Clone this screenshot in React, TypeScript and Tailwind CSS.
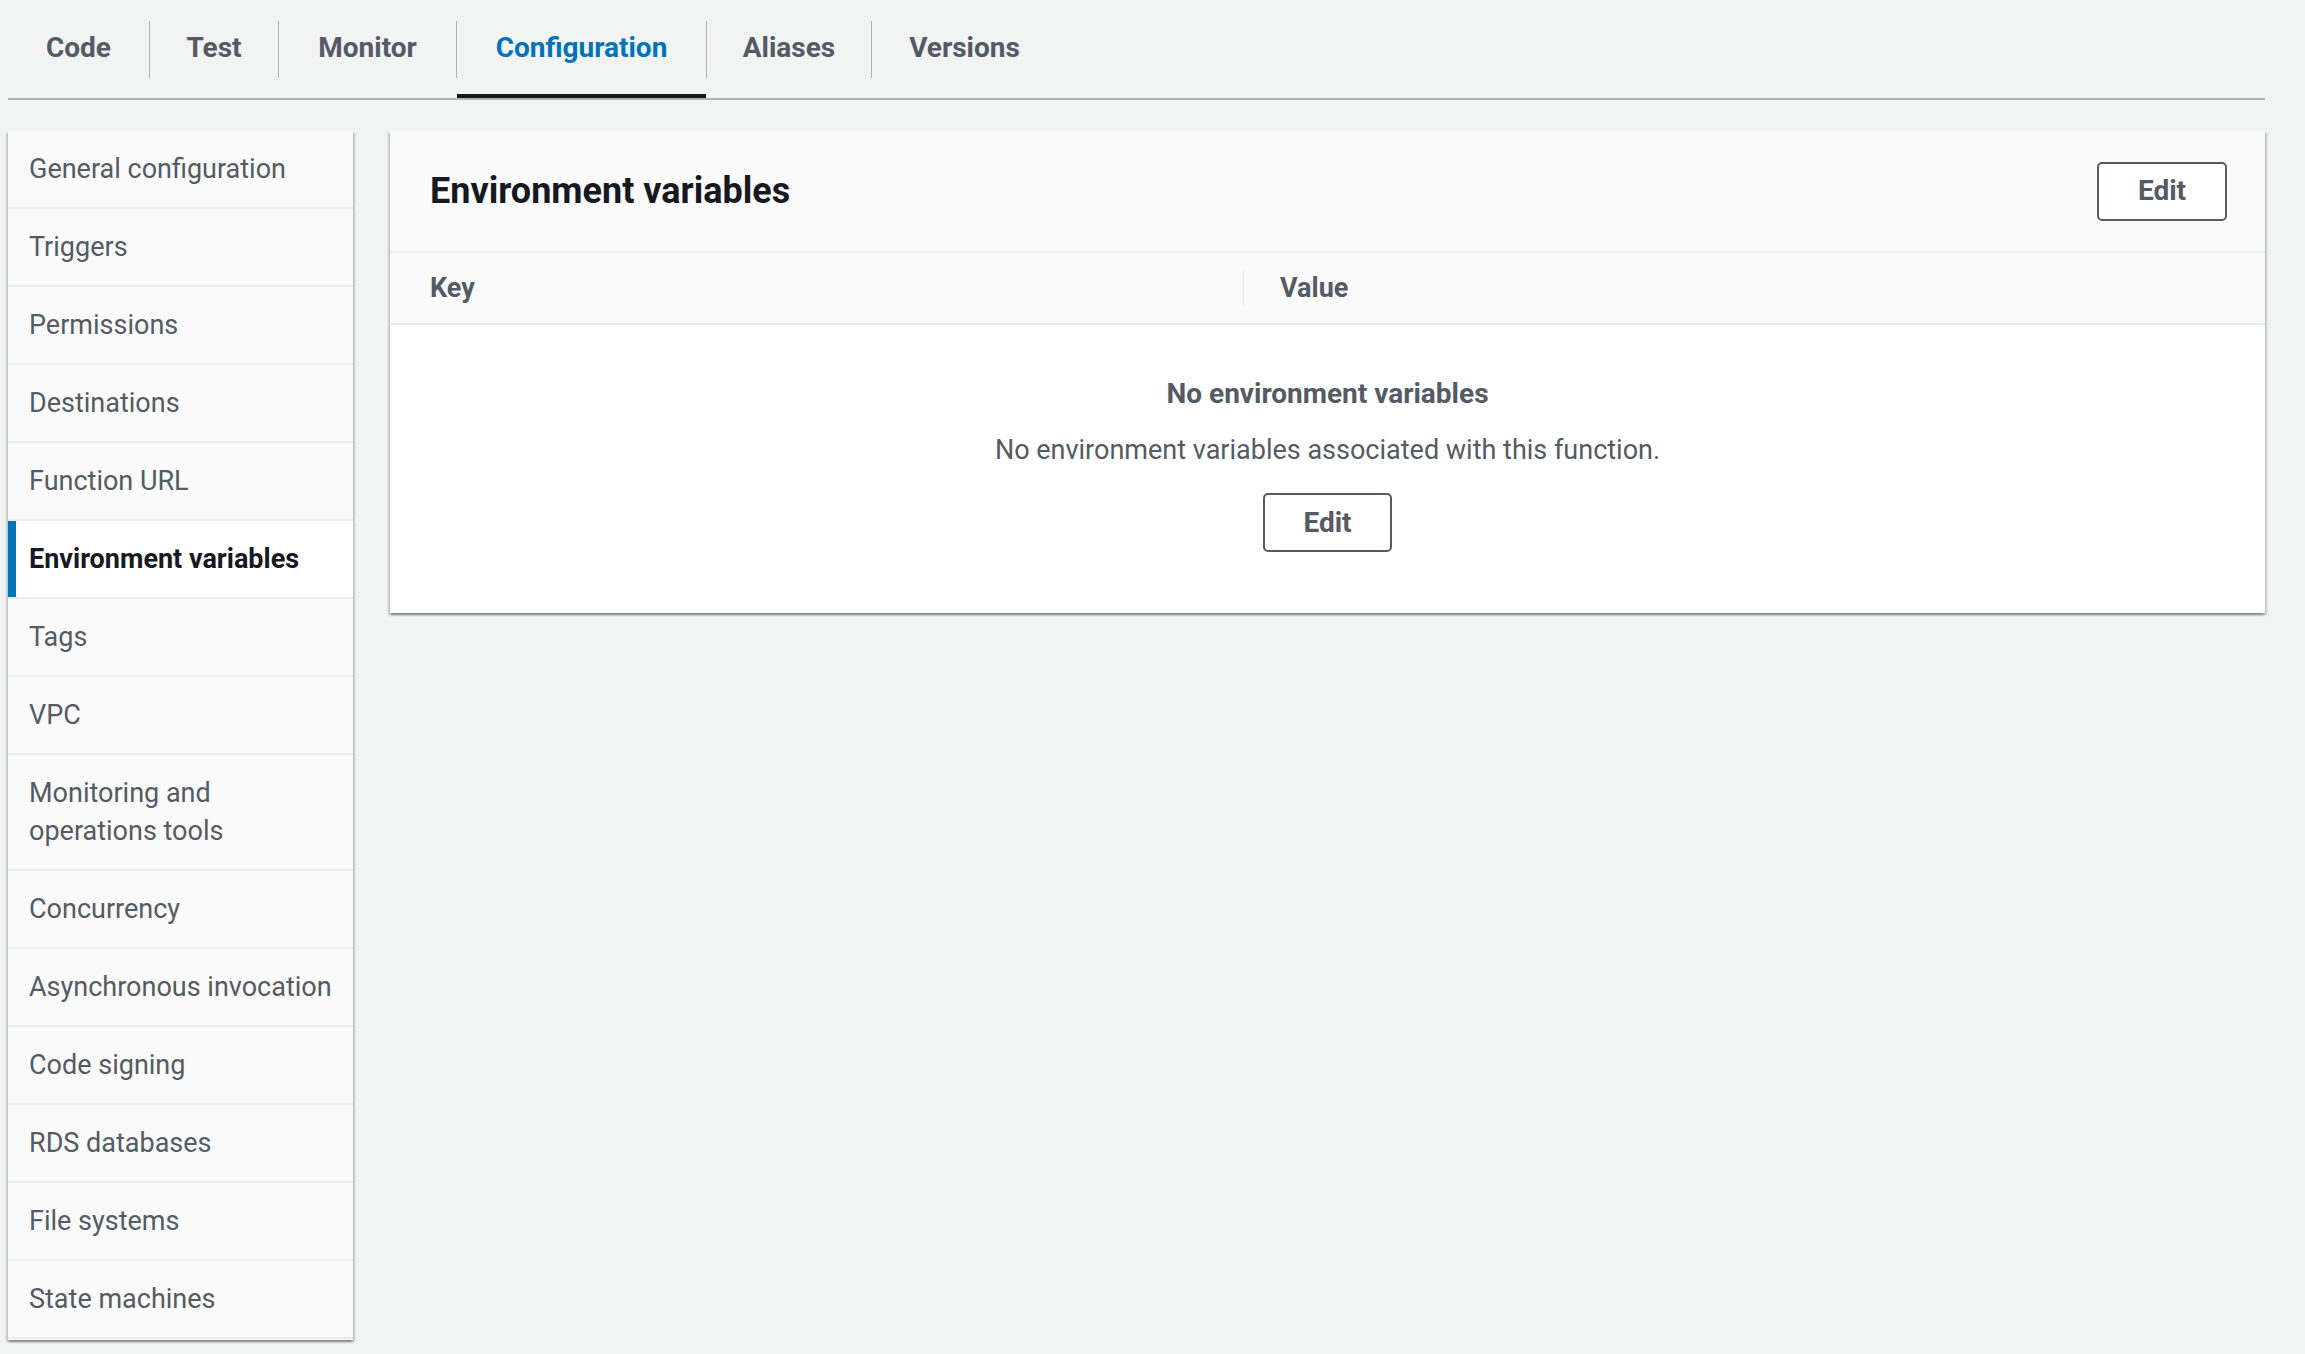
import React from "react";

const Tabs = [
  { id: 1, name: "Code", width: "w-[141px]" },
  { id: 2, name: "Test", width: "w-[128px]" },
  { id: 3, name: "Monitor", width: "w-[177px]" },
  { id: 4, name: "Configuration", width: "w-[249px]", active: true },
  { id: 5, name: "Aliases", width: "w-[164px]" },
  { id: 6, name: "Versions", width: "w-[185px]" },
];

const SideLinks = [
  "General configuration",
  "Triggers",
  "Permissions",
  "Destinations",
  "Function URL",
  "Environment variables",
  "Tags",
  "VPC",
  "Monitoring and operations tools",
  "Concurrency",
  "Asynchronous invocation",
  "Code signing",
  "RDS databases",
  "File systems",
  "State machines",
];

const shadow =
  "shadow-[0_2px_2px_0_rgba(0,28,36,0.3),2px_2px_2px_0_rgba(0,28,36,0.15),-2px_2px_2px_0_rgba(0,28,36,0.15)]";

const App: React.FC = () => {
  return (
    <div
      className="min-h-[1354px] w-full bg-[#f2f3f3] pl-[8px] pr-[40px]"
      style={{ fontFamily: "Roboto, 'Liberation Sans', sans-serif" }}
    >
      {/* Tabs */}
      <div className="flex h-[100px] items-stretch border-b-2 border-[#aab7b8]">
        {Tabs.map((tab, i) => (
          <div key={tab.id} className="flex items-center">
            {i > 0 && <div className="h-[57px] w-px bg-[#aab7b8]" />}
            <div
              className={
                (tab.active
                  ? "border-[#16191f] text-[#0073bb]"
                  : "border-transparent text-[#545b64]") +
                ` flex h-full items-center justify-center border-b-4 pt-[2px] text-[28px] font-bold ${tab.width}`
              }
            >
              {tab.name}
            </div>
          </div>
        ))}
      </div>

      <div className="mt-[31px] flex items-start gap-[37px]">
        {/* Sidebar */}
        <nav className={`flex w-[345px] shrink-0 flex-col bg-[#fafafa] ${shadow}`}>
          {SideLinks.map((name) => {
            const active = name === "Environment variables";
            return (
              <a
                key={name}
                href="#"
                className={
                  (active
                    ? "border-l-[8px] border-[#0073bb] bg-white pl-[13px] font-bold text-[#16191f]"
                    : "pl-[21px] text-[#545b64]") +
                  " mb-[2px] block py-[19px] pr-[16px] text-[27px] leading-[38px] shadow-[0_2px_0_0_#eaeded] last:mb-0 last:shadow-none"
                }
              >
                {name === "Monitoring and operations tools" ? (
                  <>
                    Monitoring and
                    <br />
                    operations tools
                  </>
                ) : (
                  name
                )}
              </a>
            );
          })}
          <div className="h-px" />
        </nav>

        {/* Main panel */}
        <section className={`flex flex-1 flex-col bg-white ${shadow}`}>
          <div className="flex h-[122px] items-center justify-between border-b-2 border-[#eaeded] bg-[#fafafa] pl-[40px] pr-[38px]">
            <h2 className="text-[36px] font-bold text-[#16191f]">Environment variables</h2>
            <button className="h-[59px] w-[130px] rounded-[5px] border-2 border-[#545b64] bg-white text-[28px] font-bold text-[#545b64]">
              Edit
            </button>
          </div>

          <div className="flex h-[72px] items-center border-b-2 border-[#eaeded] bg-[#fafafa]">
            <div className="w-[853px] pl-[40px] text-[27px] font-bold text-[#545b64]">Key</div>
            <div className="h-[36px] w-px bg-[#eaeded]" />
            <div className="pl-[36px] text-[27px] font-bold text-[#545b64]">Value</div>
          </div>

          <div className="flex flex-col items-center pt-[50px] pb-[61px] text-[#545b64]">
            <div className="text-[28px] font-bold leading-[38px]">No environment variables</div>
            <div className="mt-[18px] text-[27px] leading-[38px]">
              No environment variables associated with this function.
            </div>
            <button className="mt-[24px] h-[59px] w-[129px] rounded-[5px] border-2 border-[#545b64] bg-white text-[28px] font-bold text-[#545b64]">
              Edit
            </button>
          </div>
        </section>
      </div>
    </div>
  );
};

export default App;
